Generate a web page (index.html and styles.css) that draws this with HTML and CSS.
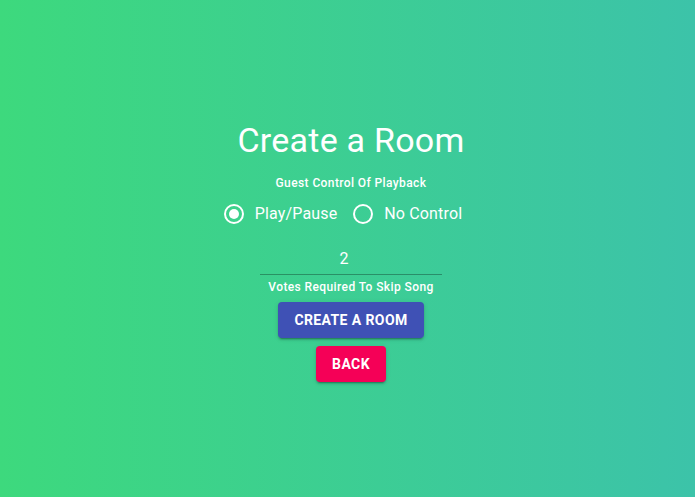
FILE: index.html
```html
<!DOCTYPE html>
<html>
<head>
<meta charset="utf-8">
<link rel="stylesheet" href="styles.css">
</head>
<body>
<main class="page">
  <div class="form">
    <h1 class="title">Create a Room</h1>
    <div class="helper">Guest Control Of Playback</div>
    <div class="radio-group">
      <label class="radio-label">
        <span class="radio checked"><span class="dot"></span></span>
        <span class="radio-text">Play/Pause</span>
      </label>
      <label class="radio-label">
        <span class="radio"></span>
        <span class="radio-text">No Control</span>
      </label>
    </div>
    <div class="field">
      <div class="input">2</div>
    </div>
    <div class="helper votes">Votes Required To Skip Song</div>
    <button class="btn primary">Create A Room</button>
    <button class="btn secondary">Back</button>
  </div>
</main>
</body>
</html>
```
FILE: styles.css
```css
html, body {
  margin: 0;
  padding: 0;
  height: 100%;
}
body {
  background: linear-gradient(to right, #3dd97d, #3cc3a9);
  font-family: Roboto, "Noto Sans", sans-serif;
  color: #fff;
}
.page {
  height: 100%;
  display: flex;
  justify-content: center;
  padding-left: 7px;
  box-sizing: border-box;
}
.form {
  display: flex;
  flex-direction: column;
  align-items: center;
  padding-top: 119px;
}
.title {
  margin: 0;
  font-size: 34px;
  font-weight: 400;
  line-height: 42px;
  letter-spacing: 0.25px;
}
.helper {
  font-size: 12px;
  font-weight: 500;
  line-height: 16px;
  margin-top: 14px;
  letter-spacing: 0.4px;
}
.radio-group {
  display: flex;
  margin-top: 8px;
  margin-right: 16px;
  gap: 16px;
}
.radio-label {
  display: flex;
  align-items: center;
  height: 30px;
}
.radio {
  width: 20px;
  height: 20px;
  box-sizing: border-box;
  border: 2px solid #fff;
  border-radius: 50%;
  display: flex;
  align-items: center;
  justify-content: center;
}
.dot {
  width: 10px;
  height: 10px;
  border-radius: 50%;
  background: #fff;
}
.radio-text {
  margin-left: 11px;
  font-size: 16px;
  line-height: 24px;
  letter-spacing: 0.15px;
}
.field {
  margin-top: 13px;
  width: 182px;
  border-bottom: 1px solid rgba(0, 0, 0, 0.3);
}
.input {
  text-align: center;
  font-size: 16px;
  line-height: 19px;
  padding: 7px 14px 6px 0;
}
.votes {
  margin-top: 4px;
}
.btn {
  font-family: Roboto, "Noto Sans", sans-serif;
  font-size: 14px;
  font-weight: 700;
  text-transform: uppercase;
  letter-spacing: 0.4px;
  color: #fff;
  border: none;
  border-radius: 4px;
  height: 36px;
  padding: 0 16px;
  box-shadow: 0 3px 1px -2px rgba(0,0,0,0.2), 0 2px 2px 0 rgba(0,0,0,0.14), 0 1px 5px 0 rgba(0,0,0,0.12);
}
.primary {
  background: #3f51b5;
  margin-top: 7px;
}
.secondary {
  background: #f50057;
  margin-top: 8px;
}
```
